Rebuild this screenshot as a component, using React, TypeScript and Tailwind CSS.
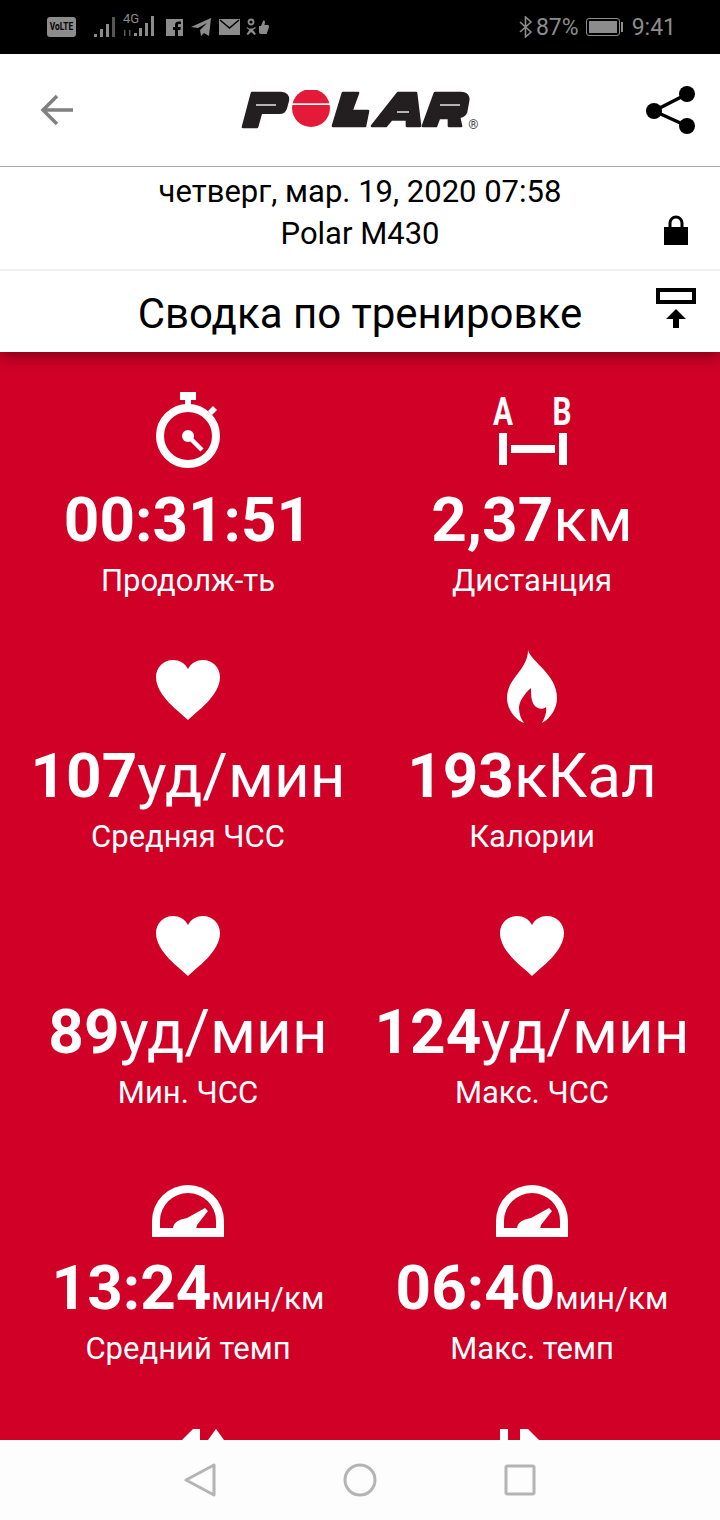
const Stopwatch = () => (
  <svg width="64" height="78" viewBox="0 0 64 78" className="mb-[19px]" fill="none">
    <rect x="24" y="1" width="16" height="8" fill="#fff" />
    <rect x="29" y="8" width="6" height="8" fill="#fff" />
    <path d="M52 20l5-5 4 4-5 5z" fill="#fff" />
    <circle cx="32" cy="45" r="28" stroke="#fff" strokeWidth="8" />
    <circle cx="32" cy="45" r="6" fill="#fff" />
    <path d="M32 45l14 14" stroke="#fff" strokeWidth="4.500" />
  </svg>
);

const AB = () => (
  <svg width="98" height="80" viewBox="-8 0 98 80" className="mb-[21px]">
    <text x="12" y="38" textAnchor="middle" fontFamily="Roboto, sans-serif" fontWeight="700" fontSize="39" fill="#fff" textLength="20" lengthAdjust="spacingAndGlyphs">A</text>
    <text x="71" y="38" textAnchor="middle" fontFamily="Roboto, sans-serif" fontWeight="700" fontSize="39" fill="#fff" textLength="19" lengthAdjust="spacingAndGlyphs">B</text>
    <rect x="8" y="46" width="8" height="32" fill="#fff" />
    <rect x="68" y="46" width="8" height="32" fill="#fff" />
    <rect x="20" y="58" width="44" height="8" fill="#fff" />
  </svg>
);

const Heart = () => (
  <svg width="64" height="60" viewBox="0 0 64 60" className="mb-[24px]">
    <path d="M32 60C24 52 0 36 0 17 0 7 8 0 17 0c6 0 12 3 15 9 3-6 9-9 15-9 9 0 17 7 17 17 0 19-24 35-32 43z" fill="#fff" />
  </svg>
);

const Flame = () => (
  <svg width="50" height="74" viewBox="0 0 50 74" className="mb-[20px]">
    <path d="M21 0C24 12 50 24 50 48C50 58 44 68 35 73C38 67 40 62 39 57C36 60 30 59 27 55C24 50 24 44 24 38C17 44 12 52 12 58C12 64 14 69 17 73C7 69 0 58 0 48C0 28 21 20 21 0z" fill="#fff" />
  </svg>
);

const Gauge = () => (
  <svg width="72" height="52" viewBox="0 0 72 52" className="mb-[19px]">
    <path d="M0 52V36a36 36 0 0 1 72 0v16zM8 43h56v-7a28 28 0 0 0-56 0z" fill="#fff" fillRule="evenodd" />
    <path d="M21 44c0-6 5-9 10-10l4-1L53 23l3 3-11 14-1 4z" fill="#fff" />
  </svg>
);

const Logo = () => (
  <svg width="240" height="40" viewBox="0 0 720 120" fill="#231f20" stroke="#231f20" strokeWidth="8" strokeLinejoin="round">
    <path d="M36 9h88c14 0 22 10 19 24l-6 22c-3 9-9 13-18 13H63l-12 43H9z" />
    <path d="M309 9h45l-20 54h50l-9 45H279z" />
    <path d="M396 108L474 9h54l12 99h-39V88h-47l-16 20z" />
    <path d="M549 108l36-99h78c16 0 24 10 21 24l-6 33c-3 8-10 13-21 15l6 27h-36V84h-30l-9 24z" />
    <path d="M48 45h60" stroke="#fff" strokeWidth="4" />
    <path d="M471 66h36" stroke="#fff" strokeWidth="4" />
    <path d="M600 45h60" stroke="#fff" strokeWidth="4" />
    <circle cx="213" cy="54" r="57" fill="#e41a38" stroke="none" />
    <rect x="150" y="40" width="126" height="5" fill="#fff" stroke="none" />
  </svg>
);

const stats = [
  { icon: <Stopwatch />, value: "00:31:51", unit: "", label: "Продолж-ть" },
  { icon: <AB />, value: "2,37", unit: "км", label: "Дистанция" },
  { icon: <Heart />, value: "107", unit: "уд/мин", label: "Средняя ЧСС" },
  { icon: <Flame />, value: "193", unit: "кКал", label: "Калории" },
  { icon: <Heart />, value: "89", unit: "уд/мин", label: "Мин. ЧСС" },
  { icon: <Heart />, value: "124", unit: "уд/мин", label: "Макс. ЧСС" },
  { icon: <Gauge />, value: "13:24", unit: "мин/км", label: "Средний темп", small: true },
  { icon: <Gauge />, value: "06:40", unit: "мин/км", label: "Макс. темп", small: true },
];

function StatusBar() {
  return (
    <div className="flex h-[54px] items-center bg-black pl-[47px] pr-[44px] text-[#8c8c8c]">
      <div className="flex h-[20px] w-[29px] items-center justify-center rounded-[3px] bg-[#8c8c8c] text-[11px] font-bold text-black">
        <span className="scale-x-75">VoLTE</span>
      </div>
      <svg width="22" height="22" viewBox="0 0 22 22" className="ml-[18px]" fill="#8c8c8c">
        <rect x="0" y="18" width="3" height="3" />
        <rect x="6" y="13" width="3" height="8" />
        <rect x="12" y="8" width="3" height="13" />
        <rect x="18" y="1" width="3" height="20" fill="#555" />
      </svg>
      <div className="relative ml-[7px] h-[22px] w-[33px]">
        <span className="absolute top-[-5px] left-0 text-[13px] leading-[16px]">4G</span>
        <svg width="33" height="21" viewBox="0 0 33 21" className="absolute top-0 left-0" fill="#8c8c8c">
          <rect x="1" y="14" width="1.500" height="6" fill="#555" />
          <rect x="6" y="14" width="1.500" height="6" fill="#555" />
          <rect x="11" y="17" width="3" height="3" />
          <rect x="16" y="12" width="3" height="8" />
          <rect x="22" y="7" width="3" height="13" />
          <rect x="28" y="0" width="3" height="20" />
        </svg>
      </div>
      <svg width="17" height="17" viewBox="0 0 17 17" className="ml-[10px]" fill="#8c8c8c">
        <path d="M0 0h17v17h-5v-6h2.500l.4-3H12V6.500c0-.9.3-1.400 1.500-1.400H15V2.400h-2.200C10.200 2.400 9 4 9 6v2H7v3h2v6H0z" />
      </svg>
      <svg width="20" height="18" viewBox="0 0 20 18" className="ml-[8px]" fill="#8c8c8c">
        <path d="M0 9L20 0l-2 18-5-3-3 3-1-6 7-7-9 5z" />
      </svg>
      <svg width="21" height="16" viewBox="0 0 21 16" className="ml-[8px]">
        <rect width="21" height="16" fill="#8c8c8c" />
        <path d="M1 1l9.500 8L20 1" fill="none" stroke="#000" strokeWidth="1.500" />
      </svg>
      <svg width="23" height="19" viewBox="0 0 23 19" className="ml-[6px]" fill="#8c8c8c">
        <circle cx="5" cy="4" r="2.500" fill="none" stroke="#8c8c8c" strokeWidth="1.800" />
        <path d="M1 9c2 2 6 2 8 0l1 1-3 2 3 4-1.500 1L5 14l-3 3-1.500-1 3-4-3-2z" />
        <path d="M13 8h2l2-5c1-1 2 0 2 1l-.5 3H22c1 0 1 1 1 2l-2 6c0 1-1 1-2 1h-4c-1 0-2-1-2-2z" />
      </svg>
      <div className="flex-1" />
      <svg width="14" height="22" viewBox="0 0 14 22" fill="none" stroke="#8c8c8c" strokeWidth="1.600">
        <path d="M1 6l11 10-5.500 5V1L12 6 1 16" />
      </svg>
      <span className="ml-[3px] text-[23px] leading-none">87%</span>
      <div className="ml-[7px] flex items-center">
        <div className="flex h-[18px] w-[34px] items-center rounded-[3px] border border-[#8c8c8c] p-[2px]">
          <div className="h-full w-[28px] bg-[#8c8c8c]" />
        </div>
        <div className="ml-[1px] h-[10px] w-[2px] bg-[#8c8c8c]" />
      </div>
      <span className="ml-[9px] text-[23px] leading-none">9:41</span>
    </div>
  );
}

function Header() {
  return (
    <div className="flex h-[113px] items-center justify-between border-b border-[#a8a8a8] bg-white pr-[24px] pl-[40px]">
      <svg width="33" height="32" viewBox="0 0 33 32" fill="none" stroke="#808080" strokeWidth="3.500">
        <path d="M33 16H3M17 2L3 16l14 14" />
      </svg>
      <div className="relative flex h-[40px] w-[240px]">
        <Logo />
        <span className="absolute right-[1px] bottom-[-1px] text-[13px] leading-none text-[#444]">®</span>
      </div>
      <svg width="50" height="50" viewBox="0 0 50 50" fill="#000">
        <circle cx="41" cy="9" r="8" />
        <circle cx="41" cy="41" r="8" />
        <circle cx="8" cy="26" r="8" />
        <path d="M8 26L41 9M8 26l33 15" stroke="#000" strokeWidth="3.500" />
      </svg>
    </div>
  );
}

export default function App() {
  return (
    <div className="flex h-[1520px] w-[720px] flex-col overflow-hidden bg-white font-['Roboto',sans-serif]">
      <StatusBar />
      <Header />
      <div className="relative z-20 flex h-[104px] flex-col items-center border-b-2 border-[#f0f0f0] bg-white pt-[4px] text-[31px] leading-[42px] text-black">
        <div>четверг, мар. 19, 2020 07:58</div>
        <div>Polar M430</div>
        <svg width="24" height="30" viewBox="0 0 24 30" className="absolute top-[48px] right-[32px]" fill="#000">
          <path d="M0 12h24v18H0z" />
          <path d="M6 13V8a6 6 0 0 1 12 0v5" fill="none" stroke="#000" strokeWidth="3" />
        </svg>
      </div>
      <div className="relative z-10 flex h-[81px] items-center justify-center bg-white pt-[5px] text-[42px] leading-none text-black shadow-[0_4px_14px_rgba(0,0,0,0.4)]">
        Сводка по тренировке
        <svg width="40" height="40" viewBox="0 0 40 40" className="absolute top-[17px] right-[24px]" fill="#000">
          <path d="M0 0h40v16H0zM4 4v8h32V4z" fillRule="evenodd" />
          <path d="M20 21l10 10h-7v9h-6v-9h-7z" />
        </svg>
      </div>
      <div className="flex-1 overflow-hidden bg-[#d00027] px-4">
        <div className="grid grid-cols-2">
          {stats.map((s) => (
            <div key={s.label} className="flex h-[256px] flex-col items-center whitespace-nowrap text-white">
              <div className="flex h-[136px] items-end justify-center">{s.icon}</div>
              <div className="flex h-[64px] items-baseline justify-center leading-[64px]">
                <span className="text-[62px] font-bold">{s.value}</span>
                {s.unit && (
                  <span className={s.small ? "text-[31.500px] font-normal" : "text-[62px] font-normal"}>{s.unit}</span>
                )}
              </div>
              <div className="mt-[13px] text-[31px] leading-[32px]">{s.label}</div>
            </div>
          ))}
          <div className="flex h-[64px] items-end justify-center">
            <svg width="84" height="11" viewBox="0 0 84 11">
              <path d="M36 11L47 0h7v11z" fill="#fff" />
              <path d="M62 11L70 0l8 11z" fill="#fff" />
            </svg>
          </div>
          <div className="flex h-[64px] items-end justify-center">
            <svg width="84" height="11" viewBox="0 0 84 11">
              <rect x="10" y="0" width="8" height="11" fill="#fff" />
              <path d="M30 0h8l11 11H30z" fill="#fff" />
            </svg>
          </div>
        </div>
      </div>
      <div className="flex h-[80px] items-center justify-center gap-[127px] bg-[#fdfdfd] pb-[1px]">
        <svg width="32" height="34" viewBox="0 0 32 34" fill="none" stroke="#b4b4b4" strokeWidth="3" strokeLinejoin="round">
          <path d="M2 17L30 2v30z" />
        </svg>
        <svg width="34" height="34" viewBox="0 0 34 34" fill="none" stroke="#b4b4b4" strokeWidth="3">
          <circle cx="17" cy="17" r="15" />
        </svg>
        <svg width="32" height="32" viewBox="0 0 32 32" fill="none" stroke="#b4b4b4" strokeWidth="3" strokeLinejoin="round">
          <rect x="2" y="2" width="28" height="28" rx="1.500" />
        </svg>
      </div>
    </div>
  );
}
